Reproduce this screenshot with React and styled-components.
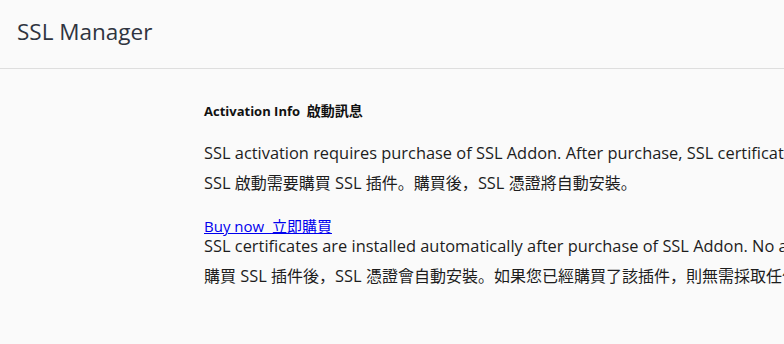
import React from "react";
import styled, { createGlobalStyle } from "styled-components";

const Global = createGlobalStyle`
  html, body {
    margin: 0;
    padding: 0;
    background: #fafafa;
    overflow: hidden;
  }
  body {
    font-family: "Open Sans", "Noto Sans CJK JP", sans-serif;
    color: #1d1d1d;
  }
`;

const Page = styled.div`
  width: 784px;
  height: 344px;
  overflow: hidden;
  background: #fafafa;
`;

const Header = styled.header`
  height: 62px;
  display: flex;
  align-items: center;
  padding: 0 17px 6px;
  border-bottom: 1px solid #dedede;
`;

const Title = styled.h1`
  margin: 0;
  font-size: 22.5px;
  font-weight: 400;
  color: #2f3440;
`;

const Content = styled.main`
  padding: 31px 0 0 204px;
  white-space: nowrap;
`;

const SectionTitle = styled.h4`
  margin: 0 0 22px;
  font-size: 13px;
  font-weight: 700;
  line-height: 20px;
  color: #111;
  white-space: pre;
`;

const HeadCjk = styled.span`
  font-family: "Noto Sans CJK JP", "Noto Sans CJK TC", sans-serif;
  font-size: 14px;
`;

const Para = styled.p`
  margin: 0 0 ${(p) => p.$gap ?? 9}px;
  font-size: 16.4px;
  line-height: 20px;
  color: #1d1d1d;
  white-space: pre;
`;

const Cjk = styled.span`
  font-family: "Noto Sans CJK JP", "Noto Sans CJK TC", sans-serif;
  font-size: 16px;
`;

const Link = styled.a`
  font-size: 15px;
  line-height: 18px;
  color: #0000ee;
  text-decoration: underline;
  cursor: pointer;
`;

const LinkCjk = styled.span`
  font-family: "Noto Sans CJK JP", "Noto Sans CJK TC", sans-serif;
`;

const CJK_RUN = /([\u3000-\u30ff\u3400-\u9fff\uff00-\uffef]+)/;

function Mixed({ text, as: Wrap = Cjk }) {
  return text.split(CJK_RUN).map((part, i) =>
    CJK_RUN.test(part) ? <Wrap key={i}>{part}</Wrap> : part
  );
}

export default function App() {
  return (
    <Page>
      <Global />
      <Header>
        <Title>SSL Manager</Title>
      </Header>
      <Content>
        <SectionTitle>
          <Mixed text="Activation Info  啟動訊息" as={HeadCjk} />
        </SectionTitle>
        <Para>
          <Mixed text="SSL activation requires purchase of SSL Addon. After purchase, SSL certificates will be installed automatically." />
        </Para>
        <Para $gap={23}>
          <Mixed text="SSL 啟動需要購買 SSL 插件。購買後，SSL 憑證將自動安裝。" />
        </Para>
        <Para>
          <Link href="#">
            <Mixed text="Buy now  立即購買" as={LinkCjk} />
          </Link>
          <br />
          <Mixed text="SSL certificates are installed automatically after purchase of SSL Addon. No action is required if you have already purchased the addon." />
        </Para>
        <Para>
          <Mixed text="購買 SSL 插件後，SSL 憑證會自動安裝。如果您已經購買了該插件，則無需採取任何行動。" />
        </Para>
      </Content>
    </Page>
  );
}
